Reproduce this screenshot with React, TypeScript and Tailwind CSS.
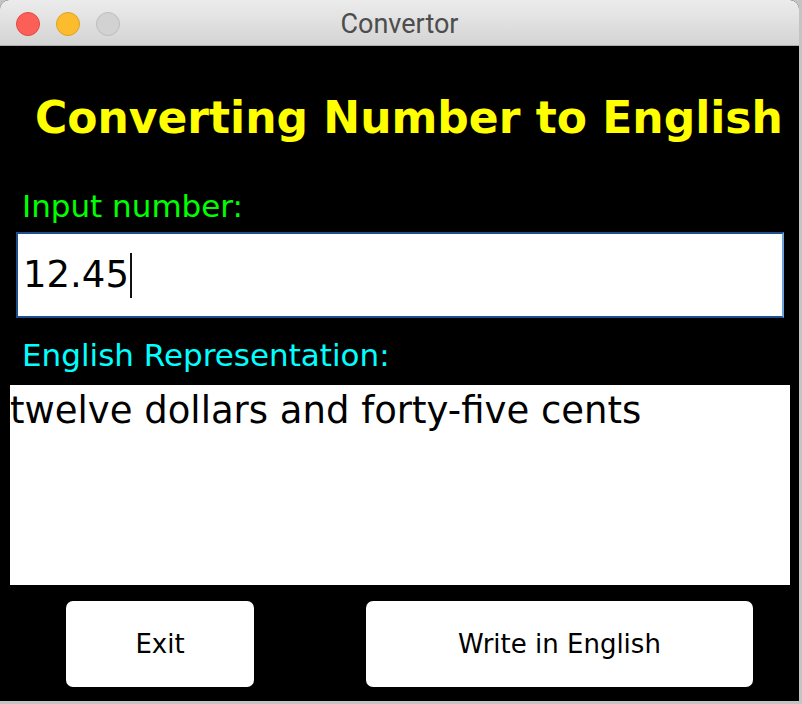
function TrafficLight({ fill, edge }: { fill: string; edge: string }) {
  return <span className={`block w-[24px] h-[24px] rounded-full border ${fill} ${edge}`} />
}

function TitleBar() {
  return (
    <div className="h-[46px] shrink-0 grid grid-cols-[1fr_auto_1fr] items-center pt-[3px] bg-gradient-to-b from-[#ececec] to-[#d4d4d4] border-b border-[#ababab]">
      <div className="flex items-center gap-[16px] pl-[16px]">
        <TrafficLight fill="bg-[#fc5f57]" edge="border-[#df4a42]" />
        <TrafficLight fill="bg-[#fdbc2e]" edge="border-[#dea124]" />
        <TrafficLight fill="bg-[#d2d2d2]" edge="border-[#bdbdbd]" />
      </div>
      <span className="text-[27px] leading-none text-[#4d4d4d] font-['Roboto',sans-serif]">Convertor</span>
      <div />
    </div>
  )
}

export default function App() {
  return (
    <div className="w-[802px] h-[704px] bg-[#c4c4c4] overflow-hidden">
      <div className="w-[799px] h-[701px] flex flex-col bg-black rounded-t-[9px] overflow-hidden">
        <TitleBar />

        <main className="flex-1 flex flex-col font-['DejaVu_Sans','Verdana',sans-serif]">
          <h1 className="mt-[50px] pl-[35px] text-[44px] leading-[44px] font-bold text-[#ffff00] whitespace-nowrap">
            Converting Number to English
          </h1>

          <label className="mt-[51px] ml-[22px] text-[31px] leading-[31px] text-[#00ff00]">Input number:</label>
          <div className="mt-[10px] ml-[16px] w-[768px] h-[86px] flex items-center bg-white border-2 border-[#1d4f8c] border-r-[#6ea3dc] pl-[5px]">
            <span className="text-[37px] leading-[38px] text-black">12.45</span>
            <span className="ml-[1px] w-[2px] h-[45px] bg-[#111]" />
          </div>

          <label className="mt-[22px] ml-[22px] text-[31px] leading-[31px] text-[#00ffff]">English Representation:</label>
          <div className="mt-[14px] ml-[10px] w-[780px] h-[200px] pt-[4px] bg-white text-[37px] leading-[44px] text-black whitespace-nowrap">
            twelve dollars and forty-five cents
          </div>

          <div className="mt-[16px] flex">
            <button className="ml-[66px] w-[188px] h-[86px] rounded-[7px] bg-white text-[26px] text-black">Exit</button>
            <button className="ml-[112px] w-[387px] h-[86px] rounded-[7px] bg-white text-[26px] text-black">
              Write in English
            </button>
          </div>
        </main>
      </div>
    </div>
  )
}
